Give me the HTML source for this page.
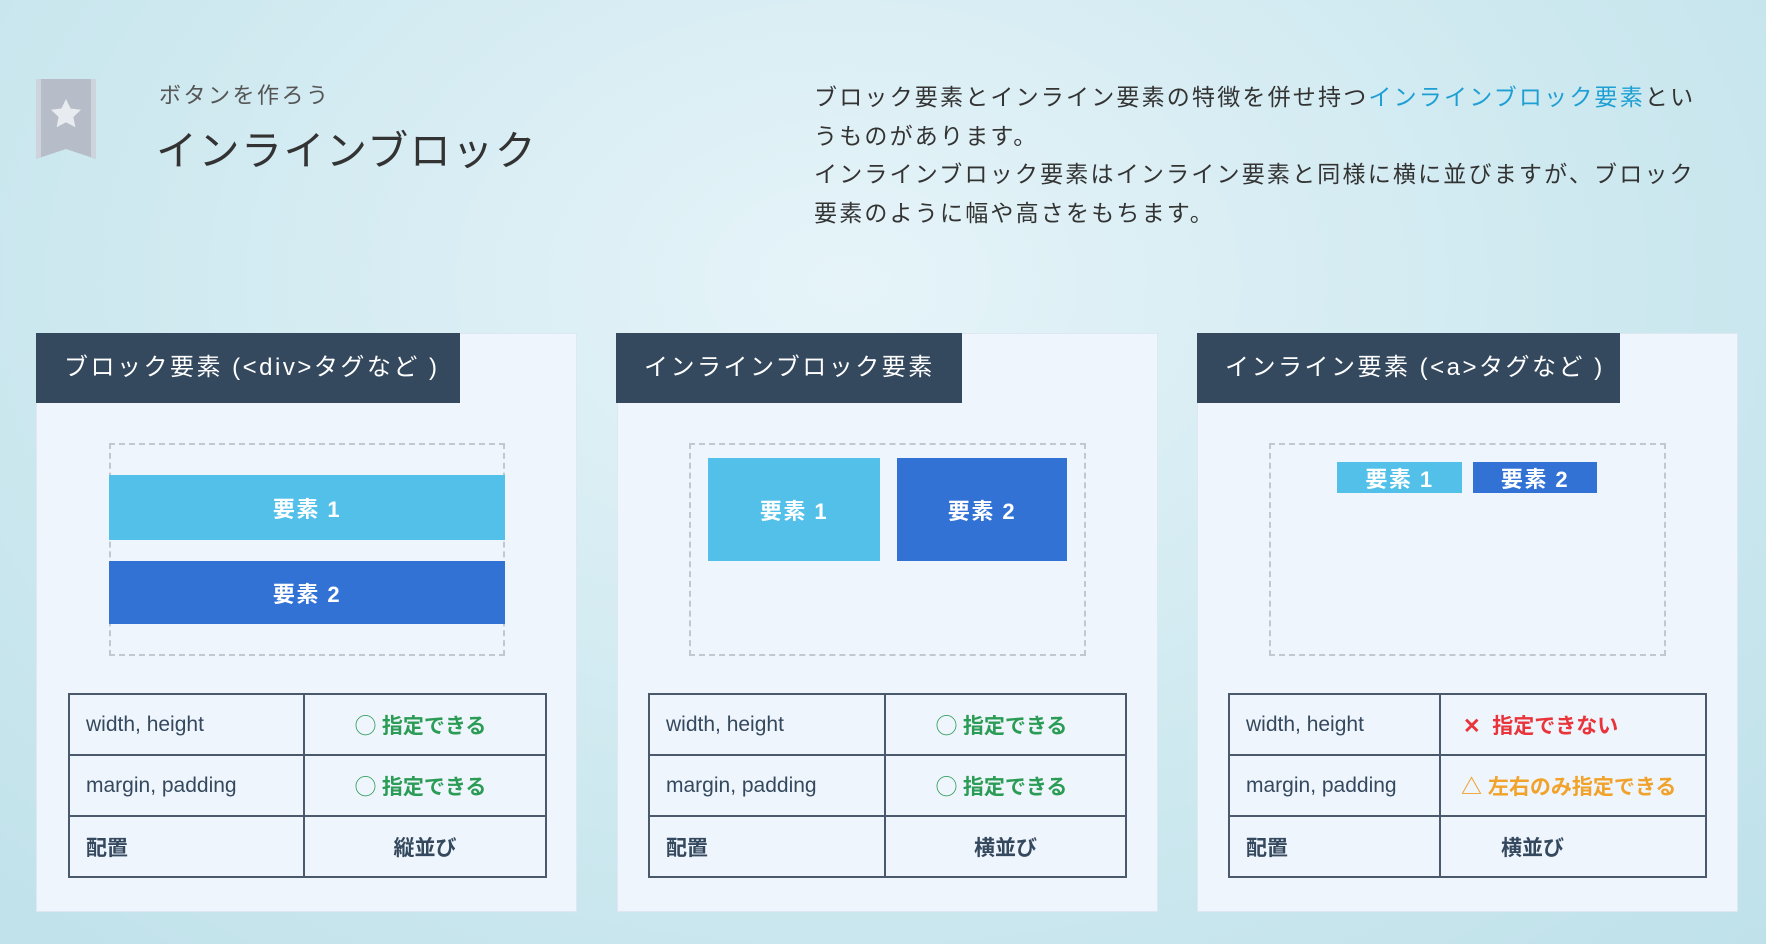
<!DOCTYPE html>
<html><head><meta charset="utf-8"><style>
*{margin:0;padding:0;box-sizing:border-box}
body{width:1766px;height:944px;overflow:hidden;position:relative;font-family:"Liberation Sans","Noto Sans CJK JP",sans-serif;background:radial-gradient(ellipse at 48% 30%,#e6f4f9 0%,#cfe9f0 55%,#bfe1ea 100%);color:#333}
.abs{position:absolute}
.sub{left:159px;top:78px;font-size:22px;color:#555;letter-spacing:2.5px}
.title{left:156px;top:117px;font-size:41px;color:#333;letter-spacing:1.5px}
.para{left:814px;top:78px;width:895px;font-size:23px;line-height:38.7px;color:#333;letter-spacing:2.2px}
.para span{color:#1e9fd4}
.panel{background:#eff5fc;border:1px solid #dfe8f2}
.tab{background:#34485e;color:#fff;font-size:24px;height:70px;line-height:70px;padding-left:28px;letter-spacing:2.5px}
.dash{border:2px dashed #c3c8d0}
.bar{color:#fff;font-size:22px;display:flex;align-items:center;justify-content:center;letter-spacing:1.5px;font-weight:600}
.c1{background:#52c0e9}.c2{background:#3272d5}
table{position:absolute;border-collapse:collapse;font-size:21px;color:#34485e}
td{border:2px solid #4a5a6c;height:61px;padding-left:16px}
.g{color:#2a9c55;font-weight:bold}.r{color:#e8343a;font-weight:bold}.o{color:#f0a22a;font-weight:bold}
.b{font-weight:bold}
</style></head><body>
<svg class="abs" style="left:36px;top:79px" width="60" height="80" viewBox="0 0 60 80"><path d="M0 0H60V80L30 70L0 80Z" fill="#b6bdc8"/><path d="M0 0H5V78L0 80Z M55 0H60V80L55 78Z" fill="#ced4dc"/><path d="M30 20l4.6 9.5 10.4 1.3-7.6 7.2 2 10.3L30 43.3l-9.4 5 2-10.3-7.6-7.2 10.4-1.3z" fill="#e8ebf0"/></svg>
<div class="abs sub">ボタンを作ろう</div>
<div class="abs title">インラインブロック</div>
<div class="abs para">ブロック要素とインライン要素の特徴を併せ持つ<span>インラインブロック要素</span>というものがあります。<br>インラインブロック要素はインライン要素と同様に横に並びますが、ブロック要素のように幅や高さをもちます。</div>

<div class="abs panel" style="left:36px;top:333px;width:541px;height:579px"></div>
<div class="abs panel" style="left:617px;top:333px;width:541px;height:579px"></div>
<div class="abs panel" style="left:1197px;top:333px;width:541px;height:579px"></div>

<div class="abs tab" style="left:36px;top:333px;width:424px">ブロック要素 (&lt;div&gt;タグなど )</div>
<div class="abs tab" style="left:616px;top:333px;width:346px">インラインブロック要素</div>
<div class="abs tab" style="left:1197px;top:333px;width:423px">インライン要素 (&lt;a&gt;タグなど )</div>

<div class="abs dash" style="left:109px;top:443px;width:396px;height:213px"></div>
<div class="abs bar c1" style="left:109px;top:475px;width:396px;height:65px">要素 1</div>
<div class="abs bar c2" style="left:109px;top:561px;width:396px;height:63px">要素 2</div>

<div class="abs dash" style="left:689px;top:443px;width:397px;height:213px"></div>
<div class="abs bar c1" style="left:708px;top:458px;width:172px;height:103px">要素 1</div>
<div class="abs bar c2" style="left:897px;top:458px;width:170px;height:103px">要素 2</div>

<div class="abs dash" style="left:1269px;top:443px;width:397px;height:213px"></div>
<div class="abs bar c1" style="left:1337px;top:462px;width:125px;height:31px">要素 1</div>
<div class="abs bar c2" style="left:1473px;top:462px;width:124px;height:31px">要素 2</div>

<table style="left:68px;top:693px;width:479px"><tr><td style="width:235px">width, height</td><td style="padding-left:50px" class="g">◯ 指定できる</td></tr><tr><td>margin, padding</td><td style="padding-left:50px" class="g">◯ 指定できる</td></tr><tr><td class="b">配置</td><td style="text-align:center;padding:0" class="b">縦並び</td></tr></table>
<table style="left:648px;top:693px;width:479px"><tr><td style="width:236px">width, height</td><td style="padding-left:50px" class="g">◯ 指定できる</td></tr><tr><td>margin, padding</td><td style="padding-left:50px" class="g">◯ 指定できる</td></tr><tr><td class="b">配置</td><td style="text-align:center;padding:0" class="b">横並び</td></tr></table>
<table style="left:1228px;top:693px;width:479px"><tr><td style="width:211px">width, height</td><td style="padding-left:22px" class="r">✕&nbsp; 指定できない</td></tr><tr><td>margin, padding</td><td style="padding-left:20px" class="o">△&nbsp;左右のみ指定できる</td></tr><tr><td class="b">配置</td><td style="padding-left:60px" class="b">横並び</td></tr></table>
</body></html>
